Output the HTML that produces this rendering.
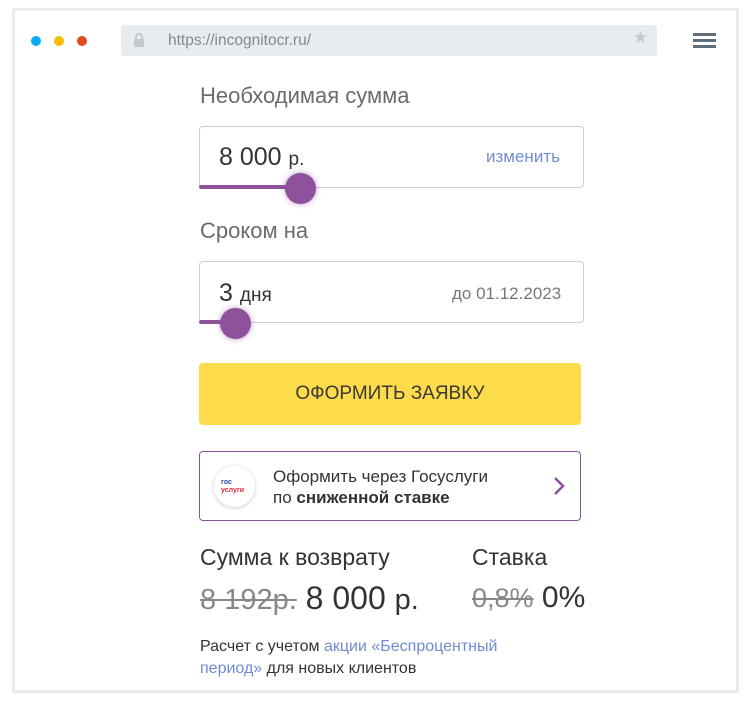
<!DOCTYPE html>
<html><head><meta charset="utf-8"><style>
*{box-sizing:border-box;margin:0;padding:0}
body{width:751px;height:709px;background:#fff;font-family:"Liberation Sans",sans-serif;position:relative;overflow:hidden}
.frame{position:absolute;left:12px;top:8px;width:727px;height:685px;border:3px solid #e9ecef}
.dot{position:absolute;top:36px;width:10px;height:10px;border-radius:50%}
.url{position:absolute;left:121px;top:25px;width:536px;height:31px;background:#e9ecef;border-radius:3px;color:#7c8a96;font-size:15.5px;line-height:31px;padding-left:47px}
.abs{position:absolute}
.lbl{position:absolute;left:200px;font-size:22px;color:#6b6b6b}
.box{position:absolute;left:199px;width:385px;height:62px;border:1px solid #cfcfcf;border-radius:4px}
.track{position:absolute;left:199px;height:4px;background:#8e529c;border-radius:2px}
.thumb{position:absolute;width:31px;height:31px;border-radius:50%;background:#8e529c;box-shadow:0 0 6px rgba(142,82,156,.6)}
</style></head><body>
<div class="frame"></div>
<div class="dot" style="left:31px;background:#0aa9f5"></div>
<div class="dot" style="left:54px;background:#fbbc05"></div>
<div class="dot" style="left:77px;background:#e24a1b"></div>
<div class="url">https://incognitocr.ru/</div>
<svg class="abs" style="left:133px;top:33px" width="12" height="15" viewBox="0 0 12 15"><rect x="1" y="6" width="10" height="8" rx="1" fill="#c2c9cf"/><path d="M3 6V4a3 3 0 0 1 6 0v2" stroke="#c2c9cf" stroke-width="2" fill="none"/></svg>
<div class="abs" style="left:633px;top:28px;color:#c2c9cf;font-size:17px">★</div>
<div class="abs" style="left:693px;top:33px;width:23px;height:3px;background:#5e6e7a;box-shadow:0 6px 0 #5e6e7a,0 12px 0 #5e6e7a"></div>

<div class="lbl" style="top:83px">Необходимая сумма</div>
<div class="box" style="top:126px"></div>
<div class="abs" style="left:219px;top:143px;font-size:25px;color:#333">8 000 <span style="font-size:19px">р.</span></div>
<div class="abs" style="left:486px;top:147px;font-size:17px;color:#6f8bd4">изменить</div>
<div class="track" style="top:185px;width:100px"></div>
<div class="thumb" style="left:285px;top:173px"></div>

<div class="lbl" style="top:218px">Сроком на</div>
<div class="box" style="top:261px"></div>
<div class="abs" style="left:219px;top:279px;font-size:25px;color:#333">3 <span style="font-size:19px">дня</span></div>
<div class="abs" style="left:452px;top:284px;font-size:17px;color:#777">до 01.12.2023</div>
<div class="track" style="top:320px;width:36px"></div>
<div class="thumb" style="left:220px;top:308px"></div>

<div class="abs" style="left:199px;top:363px;width:382px;height:62px;background:#fddb4b;border-radius:4px;text-align:center;line-height:62px;font-size:19px;color:#3a3a3a">ОФОРМИТЬ ЗАЯВКУ</div>

<div class="abs" style="left:199px;top:451px;width:382px;height:70px;border:1px solid #8e529c;border-radius:4px"></div>
<div class="abs" style="left:214px;top:466px;width:41px;height:41px;border-radius:50%;background:#fff;box-shadow:0 1px 5px rgba(0,0,0,.2);font-size:7px;font-weight:bold;color:#1f4fa0;line-height:8px;padding:13px 0 0 7px">гос<br><span style="color:#e02a3a">услуги</span></div>
<div class="abs" style="left:273px;top:466px;font-size:17px;color:#333;line-height:21px">Оформить через Госуслуги<br>по <b>сниженной ставке</b></div>
<svg class="abs" style="left:552px;top:476px" width="14" height="20" viewBox="0 0 14 20"><path d="M3 2l8 8-8 8" stroke="#8e529c" stroke-width="2.5" fill="none"/></svg>

<div class="abs" style="left:200px;top:544px;font-size:23px;color:#333">Сумма к возврату</div>
<div class="abs" style="left:472px;top:544px;font-size:23px;color:#333">Ставка</div>
<div class="abs" style="left:200px;top:580px;font-size:32px;color:#333;white-space:nowrap"><span style="font-size:29px;color:#888;text-decoration:line-through">8 192р.</span> 8 000 <span style="font-size:29px">р.</span></div>
<div class="abs" style="left:472px;top:581px;font-size:30px;color:#333;white-space:nowrap"><span style="font-size:27px;color:#888;text-decoration:line-through">0,8%</span> 0%</div>
<div class="abs" style="left:200px;top:636px;font-size:16px;color:#333;line-height:22px">Расчет с учетом <span style="color:#6f8bd4">акции «Беспроцентный<br>период»</span> для новых клиентов</div>
</body></html>
